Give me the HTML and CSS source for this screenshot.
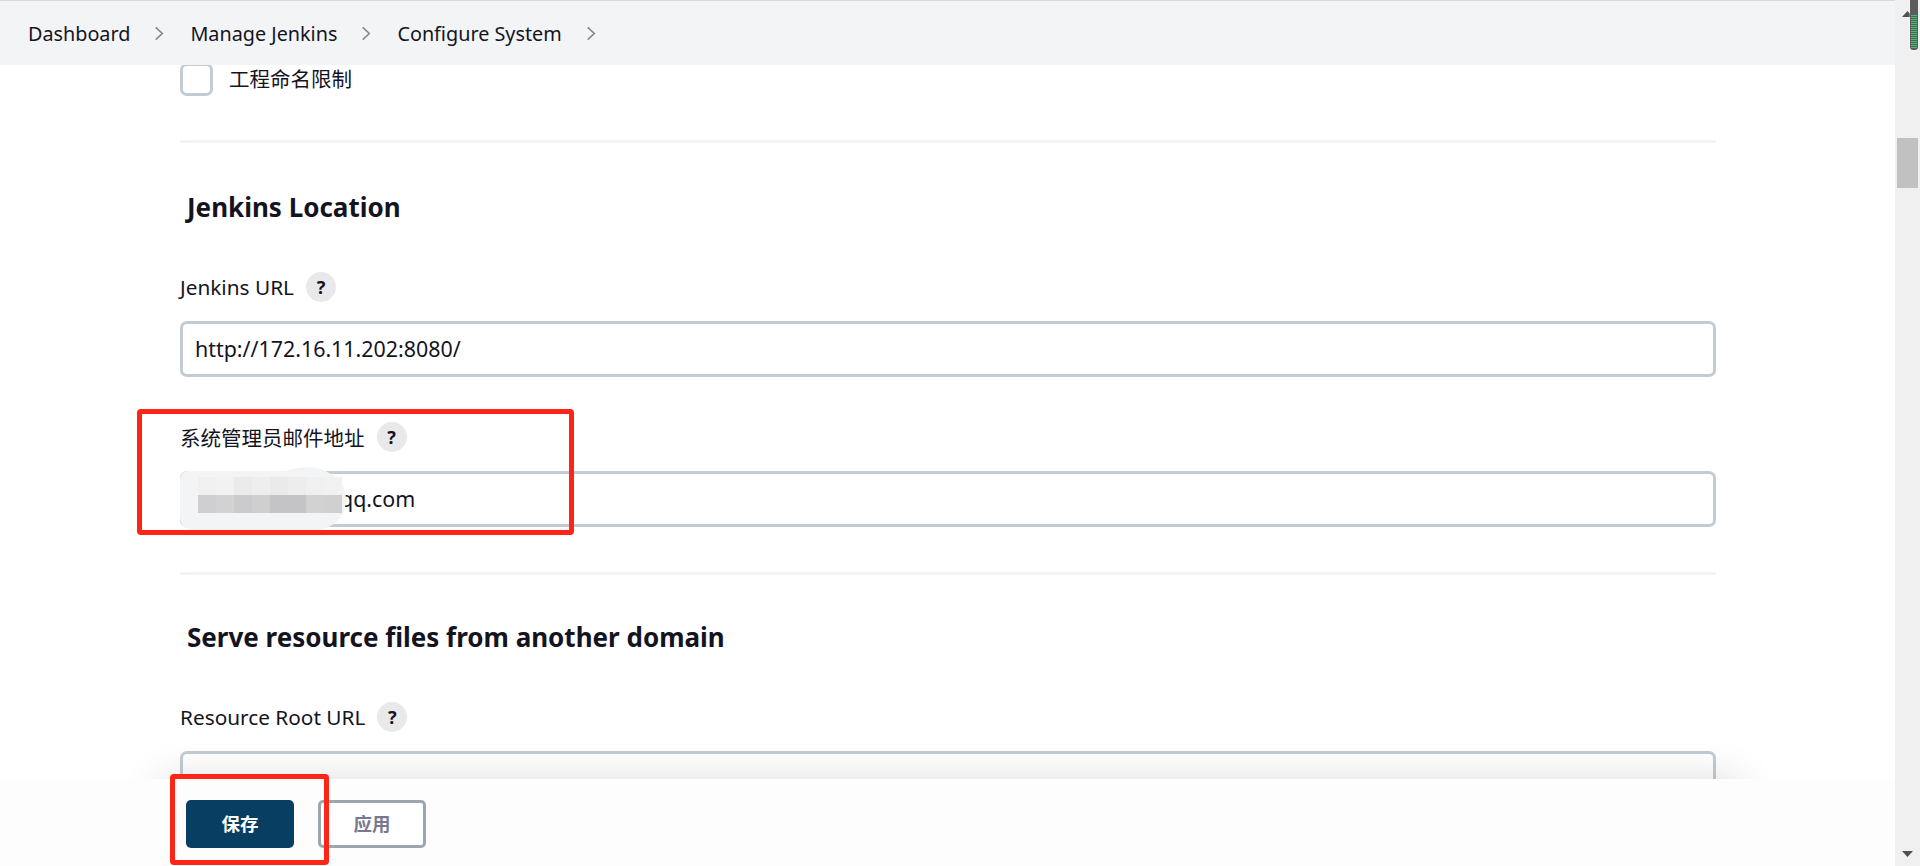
FILE: index.html
```html
<!DOCTYPE html>
<html lang="zh">
<head>
<meta charset="utf-8">
<title>Configure System</title>
<link rel="stylesheet" href="styles.css">
</head>
<body>
<div class="app">
  <div class="main">
    <nav class="crumbs">
      <span class="crumb">Dashboard</span>
      <svg class="chev" viewBox="0 0 10 16"><path d="M1.5 1.5 8.5 8l-7 6.5"/></svg>
      <span class="crumb">Manage Jenkins</span>
      <svg class="chev" viewBox="0 0 10 16"><path d="M1.5 1.5 8.5 8l-7 6.5"/></svg>
      <span class="crumb">Configure System</span>
      <svg class="chev" viewBox="0 0 10 16"><path d="M1.5 1.5 8.5 8l-7 6.5"/></svg>
    </nav>
    <div class="content">
      <div class="check-row"><span class="checkbox"></span><span class="check-label">工程命名限制</span></div>
      <hr class="rule rule-first">
      <h2 class="heading">Jenkins Location</h2>
      <div class="label-row"><span>Jenkins URL</span><span class="help">?</span></div>
      <div class="field">http://172.16.11.202:8080/</div>
      <div class="label-row label-second"><span>系统管理员邮件地址</span><span class="help">?</span></div>
      <div class="field field-mail">qq.com</div>
      <hr class="rule">
      <h2 class="heading heading-second">Serve resource files from another domain</h2>
      <div class="label-row"><span>Resource Root URL</span><span class="help">?</span></div>
      <div class="field"></div>
    </div>
    <div class="shadow"></div>
    <div class="bar">
      <button class="btn btn-save">保存</button>
      <button class="btn btn-apply">应用</button>
    </div>
    <svg class="redact" viewBox="0 0 168 64">
      <path class="blob" d="M8 4C3 4 0 8 0 14V50C0 58 6 64 18 64H130C150 64 166 52 166 32C166 14 150 4 136 1C126-1 114 1 106 4Z"/>
      <g class="mosaic-a">
        <rect x="18" y="10" width="18" height="18" fill="#f0f0f1"/><rect x="36" y="10" width="18" height="18" fill="#f2f2f3"/>
        <rect x="54" y="10" width="18" height="18" fill="#ebebec"/><rect x="72" y="10" width="18" height="18" fill="#eeeeef"/>
        <rect x="90" y="10" width="18" height="18" fill="#eaeaeb"/><rect x="108" y="10" width="18" height="18" fill="#ededee"/>
        <rect x="126" y="10" width="18" height="18" fill="#f0f0f0"/><rect x="144" y="10" width="18" height="18" fill="#f2f2f2"/>
      </g>
      <g class="mosaic-b">
        <rect x="18" y="28" width="18" height="18" fill="#cfcfd1"/><rect x="36" y="28" width="18" height="18" fill="#d2d2d3"/>
        <rect x="54" y="28" width="18" height="18" fill="#cbcbcd"/><rect x="72" y="28" width="18" height="18" fill="#cfcfd0"/>
        <rect x="90" y="28" width="18" height="18" fill="#c4c4c6"/><rect x="108" y="28" width="18" height="18" fill="#c4c4c6"/>
        <rect x="126" y="28" width="18" height="18" fill="#d2d2d3"/><rect x="144" y="28" width="18" height="18" fill="#d0d0d1"/>
      </g>
    </svg>
    <div class="mark mark-mail"></div>
    <div class="mark mark-save"></div>
  </div>
  <aside class="scrollbar">
    <svg class="arrow" viewBox="0 0 11 6"><path d="M5.5 0 11 6H0Z"/></svg>
    <div class="thumb"></div>
    <svg class="arrow arrow-down" viewBox="0 0 11 6"><path d="M0 0H11L5.5 6Z"/></svg>
    <div class="meter"><div class="meter-bars"></div></div>
  </aside>
</div>
</body>
</html>
```
FILE: styles.css
```css
* { box-sizing: border-box; }
html, body { margin: 0; height: 100%; overflow: hidden; background: #fff; }
body { font-family: "Noto Sans", "Noto Sans CJK SC", sans-serif; color: #14141f; }
.app { display: flex; width: 1920px; height: 866px; position: relative; }
.main { flex: 1; position: relative; display: flex; flex-direction: column; overflow: hidden; }

.crumbs { height: 65px; flex: none; display: flex; align-items: center; background: #f3f4f6; border-top: 1px solid #d8d9dc; padding-left: 28px; font-size: 19.8px; }
.chev { width: 10px; height: 15px; margin: 0 26px 0 24px; fill: none; stroke: #87878c; stroke-width: 1.7; }

.content { padding: 0 179px 0 180px; flex: 1; overflow: hidden; font-size: 20.8px; }
.check-row { display: flex; align-items: center; margin-top: -2px; height: 33px; }
.checkbox { width: 33px; height: 33px; border: 3px solid #c3ccd2; border-radius: 7px; background: #fff; }
.check-label { margin-left: 16px; margin-top: -3px; font-size: 20.5px; }

.rule { border: 0; height: 3px; margin: 45px 0 0; background: #f3f3f7; }
.rule-first { margin-top: 44px; }

.heading { margin: 48px 0 0 7px; font-size: 26px; line-height: 32px; font-weight: 700; }
.heading-second { margin-top: 46px; }

.label-row { display: flex; align-items: center; height: 30px; margin-top: 49px; margin-bottom: 19px; }
.label-second { margin-top: 45px; }
.label-second span:first-child { font-size: 20.5px; }
.help { width: 30px; height: 30px; margin-left: 12px; border-radius: 50%; background: #e9e9eb; display: flex; align-items: center; justify-content: center; font-size: 18px; font-weight: 700; }

.field { height: 56px; border: 3px solid #c3ccd2; border-radius: 7px; padding-left: 12px; line-height: 50px; font-size: 21.4px; background: #fff; }
.field-mail { padding-left: 157px; }

.shadow { position: absolute; left: 160px; width: 1580px; top: 779px; height: 87px; box-shadow: 0 0 40px rgba(0, 0, 0, .14); }
.bar { position: absolute; left: 0; right: 0; top: 779px; height: 87px; background: #fdfdfd; display: flex; gap: 24px; padding: 21px 0 0 186px; }
.btn { width: 108px; height: 48px; border-radius: 5px; font-family: inherit; font-size: 18.5px; font-weight: 700; padding: 0 0 2px; }
.btn-save { background: #083e62; border: 0; color: #fff; }
.btn-apply { background: #fff; border: 3px solid #9ba6af; color: #78788f; }

.redact { position: absolute; left: 180px; top: 467px; width: 168px; height: 64px; }
.blob { fill: #f3f4f6; }

.mark { position: absolute; border: 5px solid #fe2416; border-radius: 4px; }
.mark-mail { left: 137px; top: 409px; width: 437px; height: 126px; }
.mark-save { left: 170px; top: 774px; width: 159px; height: 91px; }

.scrollbar { width: 25px; flex: none; background: #f0f0f0; position: relative; display: flex; flex-direction: column; align-items: flex-start; padding: 11px 0 9px 7px; }
.arrow { width: 11px; height: 6px; fill: #505050; flex: none; }
.arrow-down { margin-top: auto; }
.thumb { position: absolute; left: 2px; top: 138px; width: 21px; height: 50px; background: #c1c1c1; }
.meter { position: absolute; left: 15px; top: 0; width: 8px; height: 50px; background: #5c5c5c; border-radius: 0 0 3px 3px; box-shadow: 0 0 2px #fff; padding: 15px 1px 0; }
.meter-bars { height: 33px; background: repeating-linear-gradient(#3cc46c 0 1px, #5c5c5c 1px 2px); }
```
